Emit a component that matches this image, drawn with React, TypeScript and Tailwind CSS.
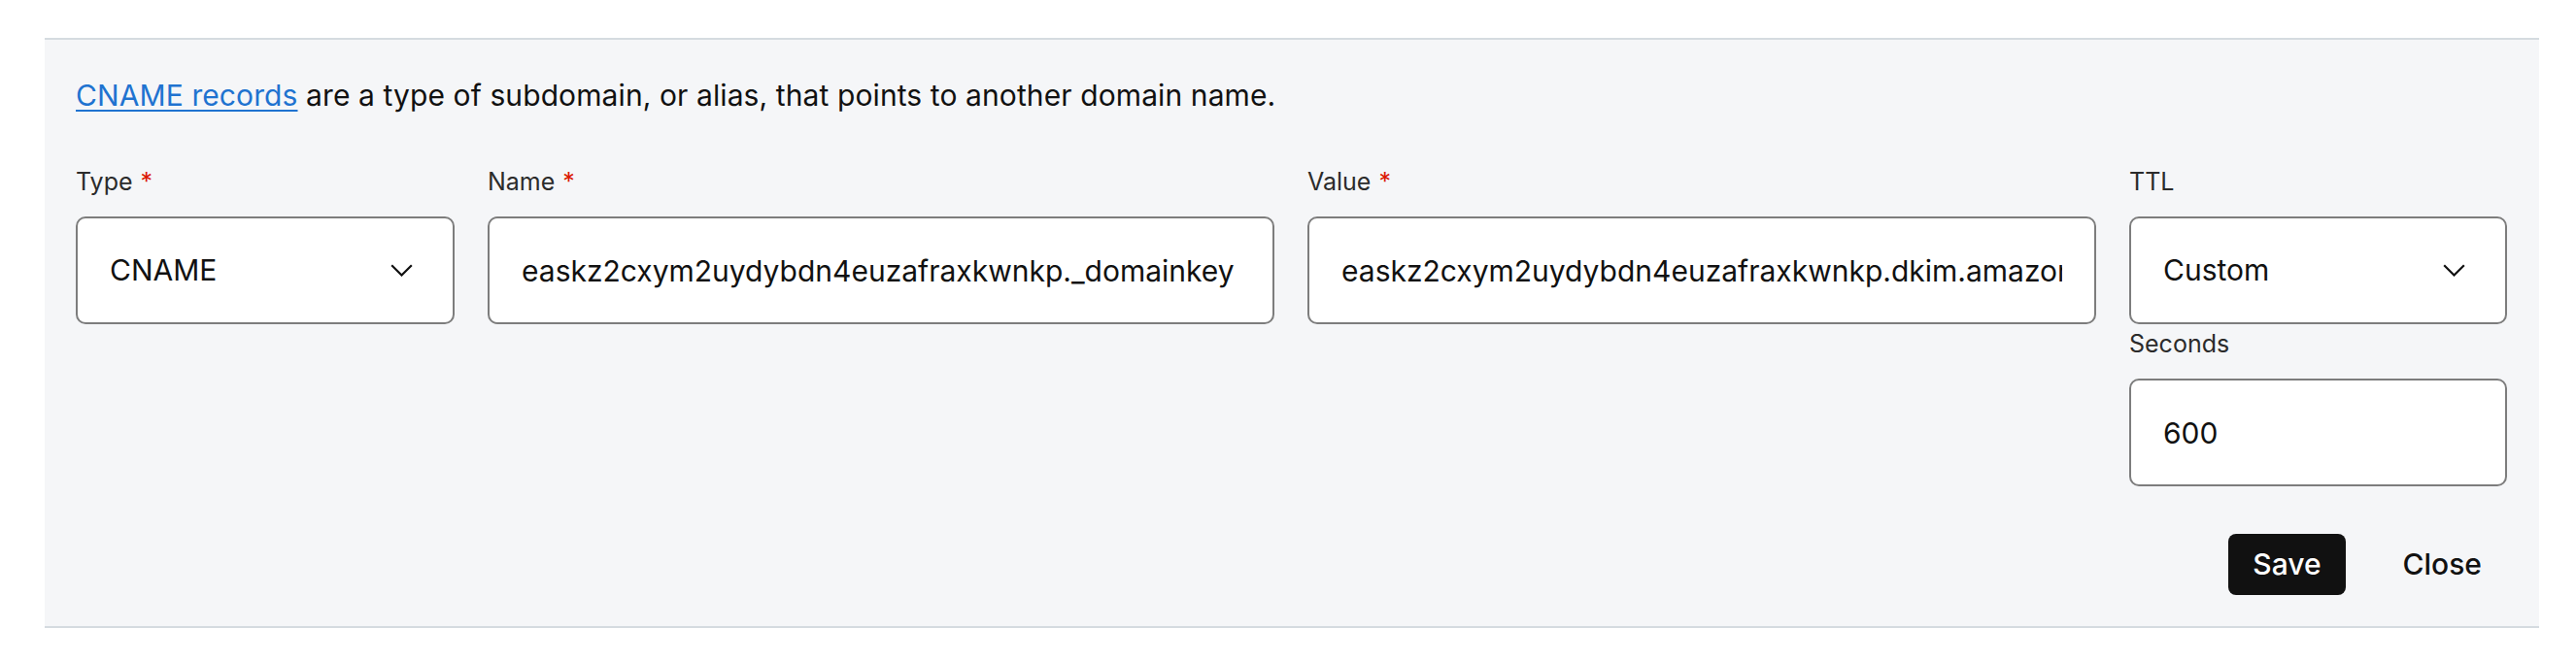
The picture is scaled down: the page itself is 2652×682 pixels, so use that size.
import { useState } from "react";

function FieldLabel({ text, required }: { text: string; required?: boolean }) {
  return (
    <div className="text-[25px] leading-[32px] text-[#2b2b2b] mb-5 whitespace-nowrap">
      {text}
      {required && <span className="text-[#db1802] ml-[8px]">*</span>}
    </div>
  );
}

function Chevron() {
  return (
    <svg width="23" height="13" viewBox="0 0 23 13" fill="none">
      <path d="M1.2 1.2l10.3 10.3L21.8 1.2" stroke="#111" strokeWidth="2.2" />
    </svg>
  );
}

function SelectBox({ value }: { value: string }) {
  return (
    <button className="w-full h-[111px] flex items-center justify-between pl-[33px] pr-[41px] bg-white border-2 border-[#7d7d7d] rounded-[10px] text-[30px] text-[#111] text-left">
      <span>{value}</span>
      <Chevron />
    </button>
  );
}

function TextBox({ value }: { value: string }) {
  const [val, setVal] = useState(value);
  return (
    <input
      value={val}
      onChange={(e) => setVal(e.target.value)}
      className="w-full h-[111px] px-[33px] bg-white border-2 border-[#7d7d7d] rounded-[10px] text-[30px] text-[#111] outline-none font-['Inter',sans-serif]"
    />
  );
}

export default function App() {
  return (
    <div className="min-h-screen bg-white pt-[39px] font-['Inter',sans-serif]">
      <div className="ml-[46px] w-[2568px] border-y-2 border-[#d5dbe0] bg-[#f5f6f8] pl-[32px] pr-[33px] pt-[37px] pb-[32px]">
        <p className="text-[30px] leading-[40px] tracking-[0.1px] text-[#111] whitespace-nowrap">
          <a href="#" className="text-[#1f73d0] underline underline-offset-[4px] decoration-2">
            CNAME records
          </a>{" "}
          are a type of subdomain, or alias, that points to another domain name.
        </p>

        <div className="mt-[53px] grid grid-cols-[390fr_810fr_812fr_389fr] gap-x-[34px] items-start">
          <div>
            <FieldLabel text="Type" required />
            <SelectBox value="CNAME" />
          </div>
          <div>
            <FieldLabel text="Name" required />
            <TextBox value="easkz2cxym2uydybdn4euzafraxkwnkp._domainkey" />
          </div>
          <div>
            <FieldLabel text="Value" required />
            <TextBox value="easkz2cxym2uydybdn4euzafraxkwnkp.dkim.amazonses.com" />
          </div>
          <div>
            <FieldLabel text="TTL" />
            <SelectBox value="Custom" />
            <div className="mt-[4px]">
              <FieldLabel text="Seconds" />
            </div>
            <TextBox value="600" />
          </div>
        </div>

        <div className="mt-[49px] flex justify-end items-center gap-[33px]">
          <button className="h-[63px] px-[25px] bg-[#111] text-white rounded-[8px] text-[30px] font-medium">
            Save
          </button>
          <button className="h-[63px] px-[26px] text-[#111] text-[30px] font-medium">
            Close
          </button>
        </div>
      </div>
    </div>
  );
}
